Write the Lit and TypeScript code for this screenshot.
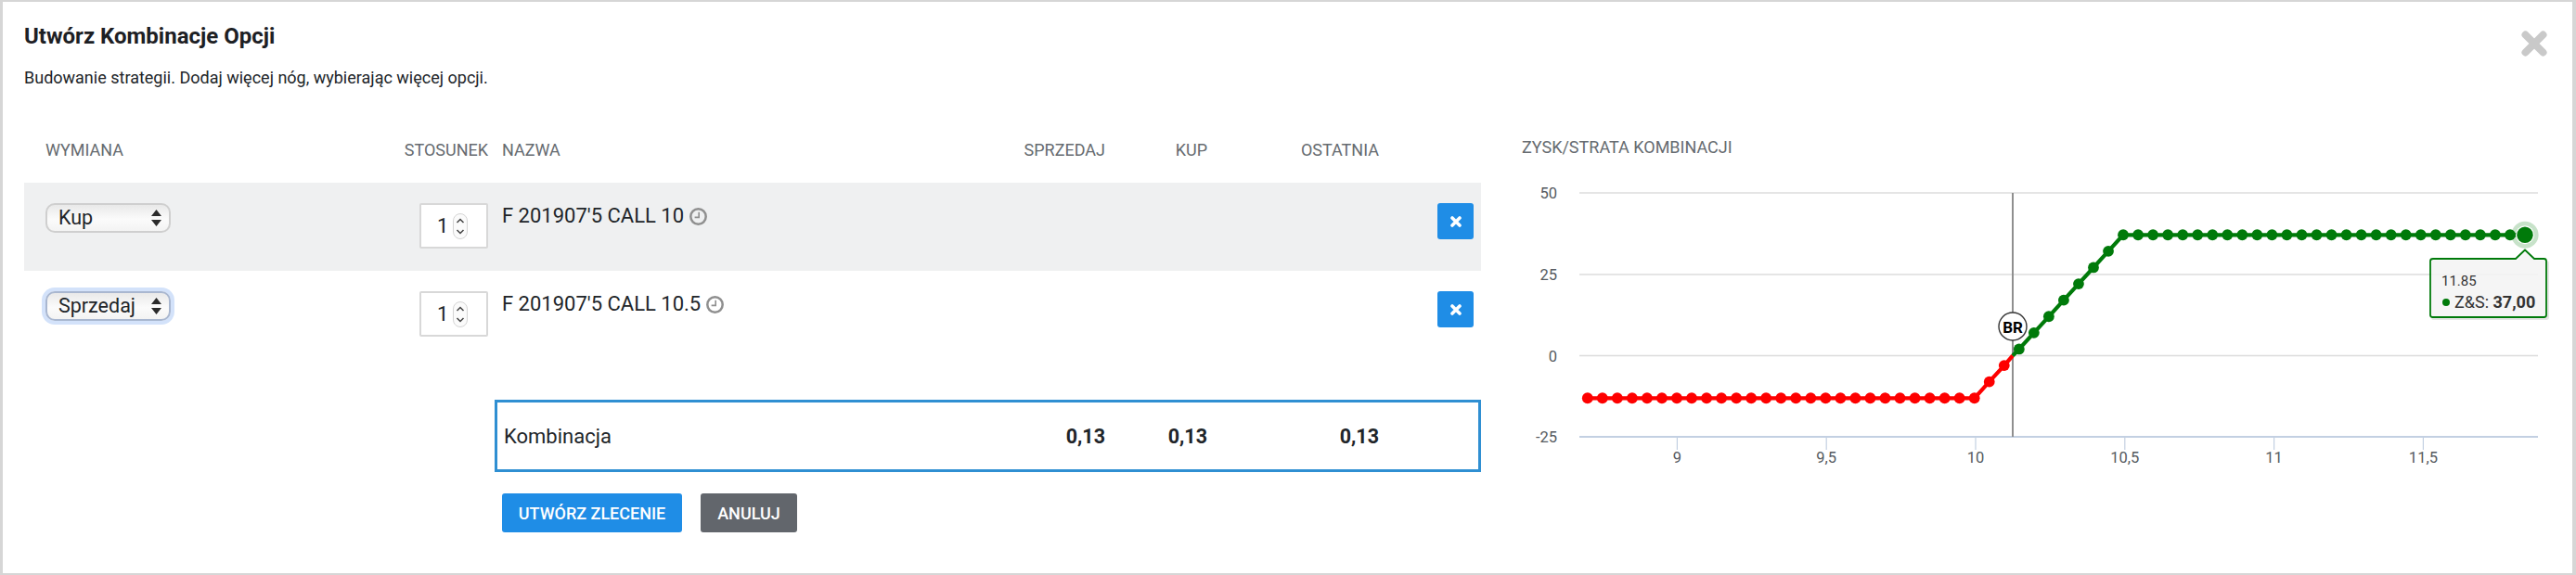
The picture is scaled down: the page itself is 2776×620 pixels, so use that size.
import { LitElement, html, css, svg } from "lit";
import { customElement } from "lit/decorators.js";

const tickX = (v: number) => 2129 + (v - 10) * 321.6;
const xOf = (v: number) => 2127.7 + (v - 10) * 320.7;
const yOf = (v: number) => 383.5 - v * 3.52;
const pl = (v: number) => Math.max(-13, Math.min(37, (v - 10.13) * 100));

const values: number[] = [];
for (let i = 0; i < 64; i++) values.push(8.7 + i * 0.05);
const red = values.filter((v) => v < 10.13);
const green = values.filter((v) => v >= 10.13);
const poly = (vals: number[]) => vals.map((v) => `${xOf(v).toFixed(1)},${yOf(pl(v)).toFixed(1)}`).join(" ");

const clock = html`<svg class="clock" viewBox="0 0 19 19" aria-hidden="true">
  <circle cx="9.5" cy="9.5" r="8.2" fill="none" stroke="#8f8f8f" stroke-width="2.5"></circle>
  <path d="M10.2 4.8V10.4H5.6" fill="none" stroke="#8f8f8f" stroke-width="1.6"></path>
</svg>`;

const removeIcon = html`<svg class="x" viewBox="0 0 12 12" aria-hidden="true">
  <path d="M2 2L10 10M10 2L2 10" fill="none" stroke="#fff" stroke-width="3.6" stroke-linecap="round"></path>
</svg>`;

const spinner = html`<svg class="spin" viewBox="0 0 16 28" aria-hidden="true">
  <rect x="0.5" y="0.5" width="15" height="27" rx="7.5" fill="#fbfbfb" stroke="#d4d4d4"></rect>
  <path d="M4.5 10L8 6.5L11.5 10M4.5 18L8 21.5L11.5 18" fill="none" stroke="#444" stroke-width="1.5"></path>
</svg>`;

const selectArrows = html`<svg class="arrows" viewBox="0 0 11 18" aria-hidden="true">
  <path d="M5.5 0L11 7H0ZM0 11H11L5.5 18Z" fill="#2b2b2b"></path>
</svg>`;

@customElement("app-root")
export class AppRoot extends LitElement {
  static styles = css`
    :host {
      display: block;
      position: relative;
      box-sizing: border-box;
      width: 2776px;
      height: 620px;
      overflow: hidden;
      background: #fff;
      border: solid #d6d6d6;
      border-width: 2px 4px 2px 3px;
      padding: 21px 0 0 23px;
      font-family: Roboto, "Liberation Sans", sans-serif;
      color: #212529;
    }
    .title {
      margin: 0;
      font-size: 24px;
      line-height: 32px;
      font-weight: 700;
      color: #1d2024;
    }
    .sub {
      margin: 17px 0 0;
      font-size: 18px;
      line-height: 24px;
    }
    .close {
      position: absolute;
      top: 31px;
      right: 27px;
      width: 28px;
      height: 28px;
    }
    .main {
      display: flex;
      align-items: flex-start;
      margin-top: 51px;
    }
    .left {
      flex: 0 0 1570px;
      padding-top: 3px;
    }
    .grid {
      display: grid;
      grid-template-columns: 23px 377px 100px 574px 91px 110px 185px 110px;
    }
    .head {
      height: 47px;
      font-size: 18px;
      line-height: 24px;
      color: #666b70;
    }
    .head .lead {
      grid-column: 2;
    }
    .r {
      text-align: right;
    }
    .name {
      padding-left: 15px;
    }
    .row {
      height: 95px;
      box-sizing: border-box;
      padding-top: 22px;
    }
    .row.shade {
      background: #eff0f1;
    }
    .row .lead {
      grid-column: 2;
    }
    .sel {
      box-sizing: border-box;
      width: 135px;
      height: 32px;
      padding: 0 8px 0 12px;
      display: flex;
      align-items: center;
      justify-content: space-between;
      border: 2px solid #cfcfcf;
      border-radius: 10px;
      background: linear-gradient(#e9e9e9, #fbfbfb 55%, #f3f3f3);
      font-size: 21.5px;
      line-height: 26px;
    }
    .sel.focus {
      border-color: #a9b7d0;
      box-shadow: 0 0 0 4px #d3e2fa;
    }
    .arrows {
      width: 11px;
      height: 18px;
      flex: none;
    }
    .ratio {
      justify-self: end;
      box-sizing: border-box;
      width: 74px;
      height: 49px;
      padding-left: 17px;
      display: flex;
      align-items: center;
      gap: 4.5px;
      background: #fff;
      border: 2px solid #d8d8d8;
      border-radius: 2px;
      font-size: 22px;
    }
    .spin {
      width: 16px;
      height: 28px;
      flex: none;
    }
    .name.text {
      display: flex;
      align-items: center;
      gap: 6px;
      height: 28px;
      font-size: 22px;
      line-height: 28px;
    }
    .clock {
      width: 19px;
      height: 19px;
    }
    .del {
      grid-column: 8;
      justify-self: end;
      margin-right: 8px;
      width: 39px;
      height: 39px;
      display: flex;
      align-items: center;
      justify-content: center;
      background: #1f8de6;
      border-radius: 3px;
    }
    .x {
      width: 12px;
      height: 12px;
    }
    .combo {
      box-sizing: border-box;
      margin: 44px 0 0 507px;
      width: 1063px;
      height: 78px;
      padding-left: 7px;
      display: grid;
      grid-template-columns: 557px 91px 110px 185px;
      align-items: center;
      border: 3px solid #2f8fd2;
      font-size: 22px;
    }
    .combo b {
      font-weight: 700;
      font-size: 21.5px;
      text-align: right;
    }
    .actions {
      display: flex;
      gap: 20px;
      margin: 23px 0 0 515px;
    }
    .btn {
      display: flex;
      align-items: center;
      justify-content: center;
      height: 42px;
      border-radius: 3px;
      color: #fff;
      font-size: 18px;
      font-weight: 500;
    }
    .btn.primary {
      width: 194px;
      background: #1f8de6;
    }
    .btn.ghost {
      width: 104px;
      background: #62666c;
    }
    .right {
      margin-left: 44px;
      flex: 0 0 1132px;
    }
    .chart-title {
      font-size: 18px;
      line-height: 24px;
      color: #666b70;
    }
    .chart {
      display: block;
      width: 1132px;
      height: 447px;
    }
    .chart text {
      font-family: Roboto, "Liberation Sans", sans-serif;
    }
  `;

  render() {
    const gridY = [208, 296, 383.5];
    const yLabels: [string, number][] = [["50", 208], ["25", 296], ["0", 384], ["-25", 471]];
    const xLabels: [string, number][] = [["9", 9], ["9,5", 9.5], ["10", 10], ["10,5", 10.5], ["11", 11], ["11,5", 11.5]];
    const last = xOf(11.85);
    const lastY = yOf(37);

    return html`
      <h1 class="title">Utwórz Kombinacje Opcji</h1>
      <p class="sub">Budowanie strategii. Dodaj więcej nóg, wybierając więcej opcji.</p>
      <svg class="close" viewBox="0 0 28 28" aria-hidden="true">
        <path d="M4.5 4.5L23.5 23.5M23.5 4.5L4.5 23.5" fill="none" stroke="#c9c9c9" stroke-width="8" stroke-linecap="round"></path>
      </svg>
      <div class="main">
        <div class="left">
          <div class="grid head">
            <div class="lead">WYMIANA</div>
            <div class="r">STOSUNEK</div>
            <div class="name">NAZWA</div>
            <div class="r">SPRZEDAJ</div>
            <div class="r">KUP</div>
            <div class="r">OSTATNIA</div>
          </div>
          <div class="grid row shade">
            <div class="lead"><div class="sel"><span>Kup</span>${selectArrows}</div></div>
            <div class="ratio"><span>1</span>${spinner}</div>
            <div class="name text"><span>F 201907'5 CALL 10</span>${clock}</div>
            <div class="del">${removeIcon}</div>
          </div>
          <div class="grid row">
            <div class="lead"><div class="sel focus"><span>Sprzedaj</span>${selectArrows}</div></div>
            <div class="ratio"><span>1</span>${spinner}</div>
            <div class="name text"><span>F 201907'5 CALL 10.5</span>${clock}</div>
            <div class="del">${removeIcon}</div>
          </div>
          <div class="combo">
            <span>Kombinacja</span><b>0,13</b><b>0,13</b><b>0,13</b>
          </div>
          <div class="actions">
            <div class="btn primary">UTWÓRZ ZLECENIE</div>
            <div class="btn ghost">ANULUJ</div>
          </div>
        </div>
        <div class="right">
          <div class="chart-title">ZYSK/STRATA KOMBINACJI</div>
          <svg class="chart" viewBox="1640 171 1132 447">
            ${gridY.map((y) => svg`<line x1="1702" x2="2735" y1=${y} y2=${y} stroke="#dcdcdc" stroke-width="1.6"></line>`)}
            <line x1="1702" x2="2735" y1="471" y2="471" stroke="#c3d0e2" stroke-width="2"></line>
            ${xLabels.map(([t, v]) => svg`
              <line x1=${tickX(v)} x2=${tickX(v)} y1="471" y2="485" stroke="#c3d0e2" stroke-width="1.2"></line>
              <text x=${tickX(v)} y="499" text-anchor="middle" font-size="16.5" fill="#555a60">${t}</text>`)}
            ${yLabels.map(([t, y]) => svg`<text x="1678" y=${y + 6} text-anchor="end" font-size="16.5" fill="#555a60">${t}</text>`)}
            <line x1="2169" x2="2169" y1="208" y2="471" stroke="#8f8f8f" stroke-width="2"></line>
            <polyline points=${poly(red) + ` 2169,${yOf(0)}`} fill="none" stroke="#fe0000" stroke-width="4.2"></polyline>
            <polyline points=${`2169,${yOf(0)} ` + poly(green)} fill="none" stroke="#007a0a" stroke-width="4.2"></polyline>
            ${red.map((v) => svg`<circle cx=${xOf(v)} cy=${yOf(pl(v))} r="5.9" fill="#fe0000"></circle>`)}
            ${green.map((v) => svg`<circle cx=${xOf(v)} cy=${yOf(pl(v))} r="5.9" fill="#007a0a"></circle>`)}
            <circle cx=${last} cy=${lastY} r="14.6" fill="#007a0a" fill-opacity="0.22"></circle>
            <circle cx=${last} cy=${lastY} r="10" fill="#fff"></circle>
            <circle cx=${last} cy=${lastY} r="8.7" fill="#007a0a"></circle>
            <circle cx="2169" cy="352" r="15" fill="#fff" stroke="#333" stroke-width="1.4"></circle>
            <text x="2169" y="358.5" text-anchor="middle" font-size="17" font-weight="700" fill="#000">BR</text>
            <path d="M2622 281H2713L2723 272L2733 281H2744Q2747 281 2747 284V342Q2747 345 2744 345H2622Q2620 345 2620 342V284Z" fill="#000" fill-opacity="0.1"></path>
            <path d="M2622 279H2711L2721 269.5L2731 279H2741.5Q2744 279 2744 281.5V339.5Q2744 342 2741.5 342H2621.5Q2619 342 2619 339.5V281.5Q2619 279 2622 279Z" fill="#f7f7f7" fill-opacity="0.88" stroke="#007a0a" stroke-width="1.8" stroke-linejoin="round"></path>
            <text x="2631" y="308" font-size="15" fill="#333">11.85</text>
            <circle cx="2636" cy="326" r="4" fill="#007a0a"></circle>
            <text x="2645" y="331.5" font-size="18" fill="#333">Z&amp;S: <tspan font-weight="700">37,00</tspan></text>
          </svg>
        </div>
      </div>
    `;
  }
}
